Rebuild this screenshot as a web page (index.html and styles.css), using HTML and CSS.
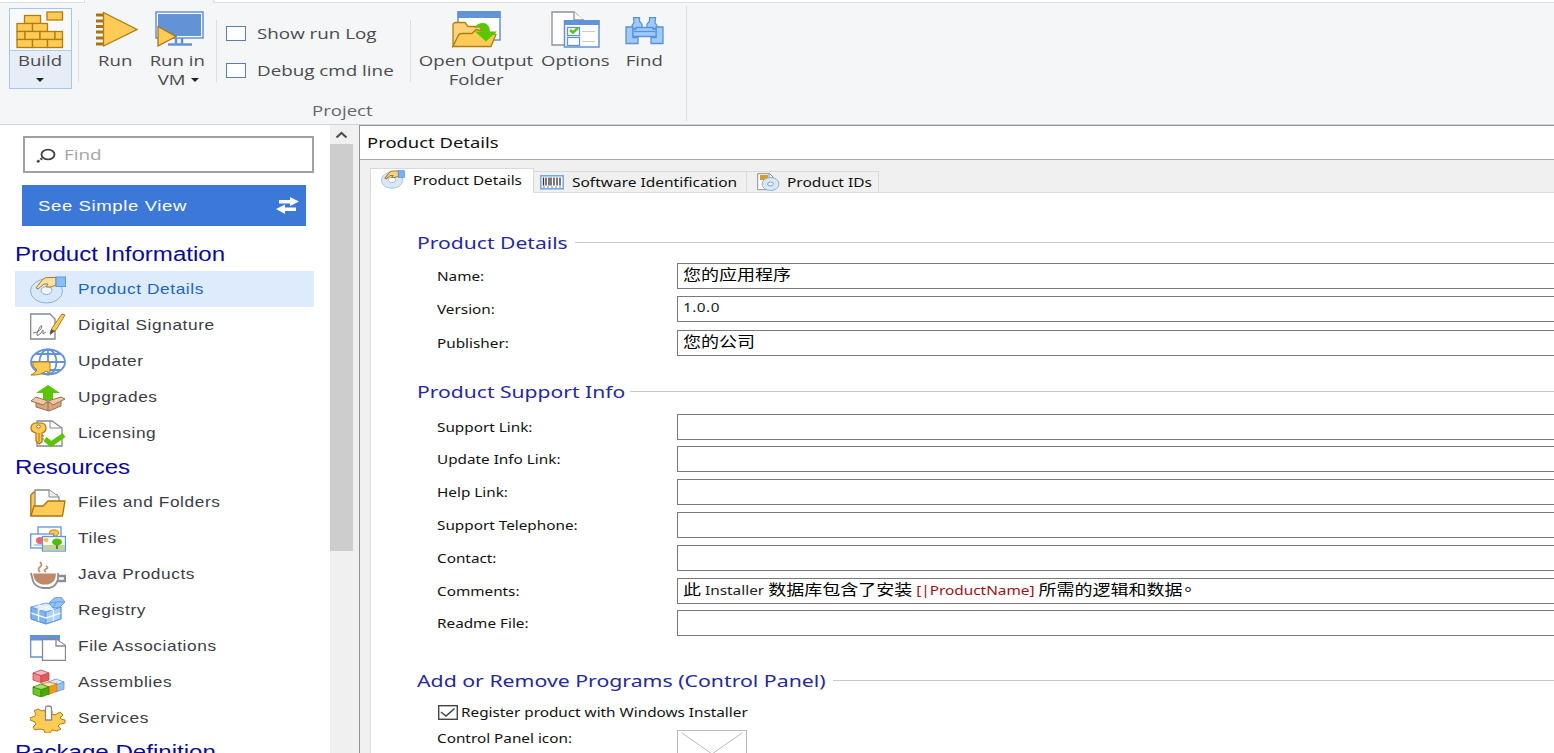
FILE: index.html
```html
<!DOCTYPE html>
<html lang="en">
<head>
<meta charset="utf-8">
<title>Product Details</title>
<link rel="stylesheet" href="styles.css">
</head>
<body>
<div class="app">
  <header class="ribbon">
    <div class="ribbon-strip"><i class="strip-left"></i><i class="strip-gap"></i><i class="strip-right"></i></div>
    <div class="ribbon-group">
      <div class="tools">
        <div class="build">
          <div class="build-icon">
            <svg width="48" height="38" viewBox="0 0 48 38" fill="#ffcb57" stroke="#b07d10" stroke-width="1.3"><rect x="31" y="1" width="15.500" height="8"/><rect x="8.500" y="4.500" width="16" height="8"/><rect x="1" y="12.500" width="15.500" height="8"/><rect x="16.500" y="12.500" width="15" height="8"/><rect x="1" y="20.500" width="8" height="8"/><rect x="9" y="20.500" width="15" height="8"/><rect x="24" y="20.500" width="15" height="8"/><rect x="39" y="20.500" width="7.500" height="8"/><rect x="1" y="28.500" width="15.500" height="8"/><rect x="16.500" y="28.500" width="15" height="8"/><rect x="31.500" y="28.500" width="15" height="8"/></svg>
          </div>
          <div class="build-label"><span class="rt">Build</span><i class="caret"></i></div>
        </div>
        <i class="sep sep-a"></i>
        <div class="tool tool-run">
          <svg width="42" height="37" viewBox="0 0 42 37"><path d="M0 4h7M0 10h7M0 15.500h7M0 21h7M0 27h7M0 33h7" stroke="#a87412" stroke-width="3"/><path d="M7.500 1.500V35L41 18.500Z" fill="#ffcb57" stroke="#b07d10" stroke-width="1.300"/></svg>
          <span class="rt">Run</span>
        </div>
        <div class="tool tool-vm">
          <svg width="49" height="37" viewBox="0 0 49 37"><rect x="1" y="1" width="47" height="26" fill="#fff" stroke="#6492d6" stroke-width="1.500"/><rect x="3" y="3" width="43" height="22" fill="#6492d6"/><path d="M21 27v6M27 27v6M13 33.500h24" stroke="#6492d6" stroke-width="2.500"/><path d="M3 15.500V35l18-9.500Z" fill="#ffcb57" stroke="#a87412" stroke-width="1.300"/></svg>
          <span class="rt">Run in</span>
          <span class="rt-row"><span class="rt">VM</span><i class="caret"></i></span>
        </div>
        <i class="sep sep-b"></i>
        <div class="checks">
          <label class="check"><i class="box"></i><span class="rt left">Show run Log</span></label>
          <label class="check"><i class="box"></i><span class="rt left">Debug cmd line</span></label>
        </div>
        <i class="sep sep-c"></i>
        <div class="tool tool-open">
          <svg width="49" height="37" viewBox="0 0 49 37"><rect x="6" y="1" width="42" height="28" fill="#fff" stroke="#6492d6" stroke-width="1.500"/><path d="M5.500 0h43v7h-43z" fill="#6492d6"/><path d="M1 35V13l2-1.500h10l3 4h13v8H8Z" fill="#ffd27a" stroke="#b07d10" stroke-width="1.300"/><path d="M1 35.500L6 25q1-2.500 4-2.500h10l4-4 20 5-5 12Z" fill="#ffcb57" stroke="#b07d10" stroke-width="1.300"/><path d="M22 17Q26 11.500 32 12Q38 13.500 38 20.500H45L34 30.500 23 20.500H30Q29 15 22 17Z" fill="#5bc500"/></svg>
          <span class="rt">Open Output</span>
          <span class="rt">Folder</span>
        </div>
        <div class="tool tool-options">
          <svg width="49" height="37" viewBox="0 0 49 37"><path d="M1 1h22l10 9v24H1Z" fill="#fff" stroke="#8e9296" stroke-width="1.300"/><path d="M23 1v8h10" fill="#fff" stroke="#8e9296" stroke-width="1.300"/><rect x="13.500" y="10" width="34.500" height="26" fill="#fff" stroke="#6492d6" stroke-width="1.500"/><path d="M13 9h35.500v5H13z" fill="#6492d6"/><rect x="16.500" y="16.500" width="12" height="8" fill="#fff" stroke="#6492d6" stroke-width="1.300"/><rect x="16.500" y="26.500" width="12" height="8" fill="#fff" stroke="#6492d6" stroke-width="1.300"/><path d="M31 20.500h13M31 30.500h13" stroke="#c9cbcd"/><path d="M19 19l3 2.500 5-4.500" fill="none" stroke="#5bc500" stroke-width="2.500"/></svg>
          <span class="rt">Options</span>
        </div>
        <div class="tool tool-find">
          <svg width="39" height="37" viewBox="0 0 39 37" fill="#9fcaff" stroke="#5b92d3" stroke-width="1.300"><path d="M8.500 6.700h6v3.500l2.500 3v4.500H7v-3l2-3Z"/><path d="M30.500 6.700h-6v3.500l-2.500 3v4.500h10v-3l-2-3Z"/><path d="M1 16h7v10.500h5v6H1ZM38 16h-7v10.500h-5v6h12Z"/><path d="M8 18h3v-1.500h17V18h3v7.500H8Z"/><path d="M9 20.500h21"/></svg>
          <span class="rt">Find</span>
        </div>
      </div>
      <div class="group-name"><span class="rt">Project</span></div>
    </div>
  </header>

  <div class="body">
    <aside class="sidebar">
      <div class="nav">
        <div class="search">
          <svg width="20" height="16" viewBox="0 0 20 16" fill="none" stroke="#444"><ellipse cx="12" cy="6.500" rx="6.500" ry="4.900" stroke-width="1.900"/><path d="M6 10.500L4.500 11.500M3.500 12.500L1 14" stroke-width="2.600"/></svg>
          <span class="search-text">Find</span>
        </div>
        <div class="simple">
          <span class="simple-text">See Simple View</span>
          <svg width="23" height="17" viewBox="0 0 23 17" fill="#fff"><path d="M3 3h11V0l9 4.500L14 9V6.500H3ZM20 10.500H9V7.500L0 12 9 17v-3h11Z"/></svg>
        </div>

        <h2 class="nav-head">Product Information</h2>
        <div class="item active">
          <svg viewBox="0 0 36 28"><ellipse cx="16.500" cy="15" rx="16" ry="12" fill="#d9e8f9" stroke="#8faed0"/><ellipse cx="16.500" cy="14.500" rx="5.500" ry="4" fill="#eef5fd" stroke="#8faed0"/><path d="M6 12L13 3q2-1.500 5-1.500h8V9l-5 2h-5l2-3h-4L8 13Z" fill="#ffe0a0" stroke="#a87a24"/><rect x="26" y="1" width="9.500" height="9.500" fill="#8bbcf5" stroke="#5d9ae0"/></svg>
          <span>Product Details</span>
        </div>
        <div class="item">
          <svg viewBox="0 0 36 28"><path d="M.7 2H20l5 5v20H.7Z" fill="#fff" stroke="#85898d" stroke-width="1.300"/><path d="M3 21q8-1 9-7q-1-2-4 5t2 3l3-4v4l3-2" fill="none" stroke="#777" /><path d="M20 22l2-6L32 2l3 1-9 15Z" fill="#ffcb57" stroke="#a87a24"/><path d="M20 23l1-6 4 2Z" fill="#555"/></svg>
          <span>Digital Signature</span>
        </div>
        <div class="item">
          <svg viewBox="0 0 36 28"><g fill="none" stroke="#6492d6" stroke-width="1.800"><ellipse cx="18" cy="14" rx="17" ry="12.500" fill="#fff"/><ellipse cx="18" cy="14" rx="8.500" ry="12.500"/><path d="M1 14h34M18 1.500v25M5 6h26M5 22h26"/></g><path d="M3 14h17v11l-4-2q-5 4.500-15 4q4-2 6-5l-4-4Z" fill="#ffcb57" stroke="#b07d10"/></svg>
          <span>Updater</span>
        </div>
        <div class="item">
          <svg viewBox="0 0 36 28"><path d="M18 1L30 9h-7v7H13V9H6Z" fill="#5bc500"/><path d="M6 14l12 5 13-5v8l-12 5L6 23Z" fill="#d7a77d" stroke="#9a7050"/><path d="M6 13l12 4-5 4L1 17ZM31 13l-13 4 5 4 12-6Z" fill="#efc8a4" stroke="#9a7050"/><path d="M18 18v9" stroke="#9a7050"/></svg>
          <span>Upgrades</span>
        </div>
        <div class="item">
          <svg viewBox="0 0 36 28"><path d="M7 1h15l10 7v18H7Z" fill="#fff" stroke="#85898d" stroke-width="1.300"/><path d="M20 1v7h11" fill="none" stroke="#85898d"/><path d="M5 3h7q4 1 4 5t-4 5v9l-3 2-3-3v-8q-5-1-5-5t4-5Z" fill="#ffcb57" stroke="#a87412" stroke-width="1.200"/><ellipse cx="8.500" cy="6.500" rx="2" ry="1.500" fill="#fff" stroke="#a87412"/><path d="M9 13v9M12 16h2M12 19h2" stroke="#a87412"/><path d="M15 19l6 5L34 15" fill="none" stroke="#5bc500" stroke-width="5"/></svg>
          <span>Licensing</span>
        </div>

        <h2 class="nav-head">Resources</h2>
        <div class="item">
          <svg viewBox="0 0 36 28"><path d="M.8 27V6L4 3h4l3 3h16v5" fill="#ffcb57" stroke="#a87412" stroke-width="1.300"/><path d="M5 18V1h14l10 7v6" fill="#fff" stroke="#85898d" stroke-width="1.300"/><path d="M19 1v7h10" fill="#eee" stroke="#85898d"/><path d="M1 27L4 17h9l5-5h17l-2.500 15Z" fill="#ffcb57" stroke="#a87412" stroke-width="1.300"/></svg>
          <span>Files and Folders</span>
        </div>
        <div class="item">
          <svg viewBox="0 0 36 28" stroke="#6492d6" stroke-width="1.300"><rect x="8" y="2" width="23" height="14" fill="#fff"/><ellipse cx="24" cy="8" rx="4.500" ry="3" fill="#ffcb57" stroke="#e59a10"/><rect x=".7" y="9" width="23" height="14" fill="#fff"/><ellipse cx="10" cy="15.500" rx="4" ry="3.500" fill="#e56a70" stroke="none"/><path d="M4 20h8" stroke="#8bbcf5"/><rect x="12.500" y="11.500" width="23" height="14.500" fill="#f9fbef"/><path d="M13 20h22v5.500H13z" fill="#bfd49b" stroke="none"/><path d="M27 17v7" stroke="#8a6540" stroke-width="2"/><ellipse cx="27" cy="17" rx="5" ry="3.500" fill="#4fbd10" stroke="none"/><ellipse cx="16" cy="15" rx="2.500" ry="2" fill="#ffbb40" stroke="none"/></svg>
          <span>Tiles</span>
        </div>
        <div class="item">
          <svg viewBox="0 0 36 28"><path d="M10 11q-3-3 0-5t0-5M16 11q-3-2 0-3t0-3" fill="none" stroke="#c59070" stroke-width="1.800"/><path d="M1 12l2 8q2 6 10 7h6q7-1 9-9V12" fill="#fff" stroke="#8b8f93" stroke-width="1.800"/><path d="M3 12.500h23q0 9-8 11h-6Q4 21.500 3 12.500Z" fill="#c08a68"/><path d="M28 15h7v5h-8" fill="none" stroke="#8b8f93" stroke-width="2.300"/></svg>
          <span>Java Products</span>
        </div>
        <div class="item">
          <svg viewBox="0 0 36 28" stroke="#5c93d6" stroke-width=".8"><path d="M1 10l15 5v12L1 22Z" fill="#7db2ee"/><path d="M16 15l15-5v12l-15 5Z" fill="#a8d0fa"/><path d="M1 10l15-4 15 4-15 5Z" fill="#d9ebff"/><path d="M1 16l15 5 15-5M8.500 12.500v12M23.500 12.500v12M8 8l15 5M23 8L8 13" fill="none" stroke="#eef6ff" stroke-width="1.400"/><path d="M1 10v12l15 5 15-5V10" fill="none"/><path d="M19 6l5-5 7-1 4 5-5 5-7 1Z" fill="#94c3f8"/><path d="M19 6l7-1 9 0M26 5l-3 6" fill="none"/></svg>
          <span>Registry</span>
        </div>
        <div class="item">
          <svg viewBox="0 0 36 28"><path d="M.7 3H29v21H.7Z" fill="#fff" stroke="#6492d6" stroke-width="1.300"/><path d="M0 2h30v5.500H0z" fill="#6492d6"/><path d="M12.500 6.500h14l9 6v15h-23Z" fill="#fff" stroke="#85898d" stroke-width="1.300"/><path d="M26 6.500V13h9.500" fill="#fff" stroke="#85898d" stroke-width="1.300"/></svg>
          <span>File Associations</span>
        </div>
        <div class="item">
          <svg viewBox="0 0 36 28" stroke-width=".8"><g stroke="#c4434c"><path d="M3 4l8 2.500v7L3 11Z" fill="#ef8a90"/><path d="M11 6.500L19 4v7l-8 2.500Z" fill="#e05a64"/><path d="M3 4l8-3 8 3-8 2.500Z" fill="#f9b9bb"/></g><g stroke="#5c93d6"><path d="M18 14l8 3v6l-8-3Z" fill="#a8d0fa"/><path d="M26 15l8-2v7l-8 3Z" fill="#94c3f8"/><path d="M18 13l8-3 8 3-8 3Z" fill="#d9ebff"/></g><g stroke="#c88312"><path d="M18 17l9-3v8l-9 4Z" fill="#ee9b1d"/><path d="M11 15l8-2 8 2-9 3Z" fill="#ffe0b0"/></g><g stroke="#398900"><path d="M3 18l8 2.500V28l-8-3Z" fill="#67c72c"/><path d="M11 20.500l8-2.500v7l-8 3Z" fill="#4aaa0b"/><path d="M3 18l8-3 8 3-8 2.500Z" fill="#a5e274"/></g></svg>
          <span>Assemblies</span>
        </div>
        <div class="item">
          <svg viewBox="0 0 36 28"><path d="M14 6h8v3l3 1 5-3 3 3-3 3 1 1 4 1v3l-5 1-2 2 3 3-4 2-5-1-2 3h-5l-1-3-4-1-5 1-2-3 3-3-1-2-5-2v-2l5-2 1-2-2-3 4-2 4 2 2-1Z" fill="#ffcb57" stroke="#b07d10"/><path d="M15.500 3q0-2 3-2t3 2v12h-6Z" fill="#fff" stroke="#85898d" stroke-width="1.300"/></svg>
          <span>Services</span>
        </div>
        <h2 class="nav-head">Package Definition</h2>
      </div>
      <div class="scroll">
        <div class="scroll-up"><svg width="13" height="8" viewBox="0 0 13 8"><path d="M1.500 6.500L6.500 2l5 4.500" fill="none" stroke="#505050" stroke-width="2.200"/></svg></div>
        <div class="thumb"></div>
      </div>
    </aside>

    <main class="main">
      <div class="title"><span>Product Details</span></div>
      <div class="page">
        <div class="tabs">
          <div class="tab on">
            <svg width="24" height="19" viewBox="0 0 36 28" preserveAspectRatio="none"><ellipse cx="16.500" cy="15" rx="16" ry="12" fill="#d9e8f9" stroke="#8faed0"/><ellipse cx="16.500" cy="14.500" rx="5.500" ry="4" fill="#fff" stroke="#8faed0"/><path d="M6 12L13 3q2-1.500 5-1.500h8V9l-5 2h-5l2-3h-4L8 13Z" fill="#f5d28d" stroke="#a87a24" stroke-width="1.500"/><rect x="26" y="1" width="9" height="10" fill="#78b0f0" stroke="#4c8cdc"/></svg>
            <span>Product Details</span>
          </div>
          <div class="tab tab-id">
            <svg width="24" height="15" viewBox="0 0 24 15"><rect x=".8" y=".8" width="22.400" height="13" fill="#fff" stroke="#74a4e4" stroke-width="1.500"/><path d="M3.500 2.500v8M6 2.500v8M9 2.500v8M11 2.500v8M14 2.500v8M17 2.500v8M20 2.500v8" stroke="#333" stroke-width="1.300"/><path d="M3 12h18" stroke="#777" stroke-dasharray="2 2"/></svg>
            <span>Software Identification</span>
          </div>
          <div class="tab tab-pid">
            <svg width="23" height="18" viewBox="0 0 23 18"><path d="M.7.700h12l4 4v12H.7Z" fill="#fff" stroke="#8b8f93"/><path d="M3 2h8v5H3z" fill="#d49b2f"/><path d="M12 1v4h4" fill="none" stroke="#8b8f93"/><ellipse cx="13.500" cy="11" rx="8.500" ry="6.500" fill="#d9e8f9" stroke="#8faed0"/><ellipse cx="13.500" cy="11" rx="2.800" ry="2" fill="#fff" stroke="#6c9fd8"/></svg>
            <span>Product IDs</span>
          </div>
        </div>
        <div class="sheet">
          <h3 class="legend legend-details"><span>Product Details</span><i></i></h3>
          <div class="rows rows-details">
            <div class="row"><label>Name:</label><div class="input"><span>您的应用程序</span></div></div>
            <div class="row"><label>Version:</label><div class="input"><span><b>1.0.0</b></span></div></div>
            <div class="row"><label>Publisher:</label><div class="input"><span>您的公司</span></div></div>
          </div>
          <h3 class="legend legend-support"><span>Product Support Info</span><i></i></h3>
          <div class="rows rows-support">
            <div class="row"><label>Support Link:</label><div class="input"></div></div>
            <div class="row"><label>Update Info Link:</label><div class="input"></div></div>
            <div class="row"><label>Help Link:</label><div class="input"></div></div>
            <div class="row"><label>Support Telephone:</label><div class="input"></div></div>
            <div class="row"><label>Contact:</label><div class="input"></div></div>
            <div class="row"><label>Comments:</label><div class="input"><span>此<b> Installer </b>数据库包含了安装<b> <em>[|ProductName]</em> </b>所需的逻辑和数据<u lang="zh-Hant">。</u></span></div></div>
            <div class="row"><label>Readme File:</label><div class="input"></div></div>
          </div>
          <h3 class="legend legend-arp"><span>Add or Remove Programs (Control Panel)</span><i></i></h3>
          <div class="register">
            <svg width="20" height="15" viewBox="0 0 20 15"><rect x=".7" y=".7" width="18.600" height="13.600" fill="#fff" stroke="#444" stroke-width="1.400"/><path d="M3 7l5 4 8.500-7.500" fill="none" stroke="#444" stroke-width="1.600"/></svg>
            <span>Register product with Windows Installer</span>
          </div>
          <div class="cp-row">
            <label>Control Panel icon:</label>
            <div class="icon-well"><svg width="68" height="44" viewBox="0 0 68 44"><path d="M4 2L64 44M64 2L4 44" stroke="#bbb"/></svg></div>
          </div>
        </div>
      </div>
    </main>
  </div>
</div>
</body>
</html>
```

FILE: styles.css
```css
* { box-sizing: border-box; }
body { margin: 0; overflow: hidden; background: #fff; }
i { font-style: normal; }
svg { display: block; flex: none; }
.app { width: 1554px; height: 753px; overflow: hidden; display: flex; flex-direction: column; }

/* Ribbon */
.ribbon { height: 125px; flex: none; background: #f4f6f8; border-bottom: 1px solid #d4d5d6; }
.ribbon-strip { display: flex; height: 3px; }
.strip-left { width: 85px; background: #fff; border-bottom: 1px solid #dcdee0; border-right: 1px solid #dcdee0; }
.strip-gap { width: 128px; }
.strip-right { flex: 1; background: #fff; border-bottom: 1px solid #dcdee0; border-left: 1px solid #dcdee0; }
.ribbon-group { width: 687px; height: 115px; margin-top: 3px; border-right: 1px solid #dcdee0; }
.tools { display: flex; height: 92px; padding-left: 9px; }
.rt { display: block; font: 14.3px/19px "Open Sans", sans-serif; color: #4b4b50; white-space: nowrap; transform: scaleX(1.3); }
.rt.left { transform-origin: 0 50%; }
.build { width: 63px; height: 81px; margin-top: 2px; border: 1px solid #a0c8f2; background: #e6edf6; }
.build-icon { height: 42px; padding: 2px 0 0 6px; background: #f7f9fc; border-bottom: 1px solid #a8cdf2; }
.build-label { display: flex; flex-direction: column; align-items: center; }
.build-label .rt { margin-left: -2px; }
.build-label .caret { margin: 8px 0 0 -2px; }
.caret { width: 0; height: 0; border: 4px solid transparent; border-top: 4px solid #222; border-bottom: 0; }
.sep { width: 1px; height: 62px; margin-top: 14px; background: #dcdfe2; flex: none; }
.sep-a { margin-left: 6px; }
.sep-b { margin-left: 7px; }
.sep-c { margin-left: 10px; }
.tool { display: flex; flex-direction: column; align-items: center; padding-top: 5px; }
.tool svg { margin-bottom: 3px; }
.tool-run { width: 42px; margin-left: 17px; }
.tool-run .rt { margin-left: -4px; }
.tool-vm { width: 60px; margin-left: 11px; }
.tool-vm svg { margin-left: 1px; }
.tool-vm > .rt { margin-left: -3px; }
.rt-row { display: flex; align-items: center; gap: 9px; margin-left: 2px; }
.checks { margin: 18px 0 0 9px; width: 174px; display: flex; flex-direction: column; gap: 18px; }
.check { display: flex; align-items: center; height: 19px; gap: 11px; }
.check .rt { transform: scaleX(1.315); }
.box { width: 20px; height: 15px; flex: none; border: 1px solid #5d7db0; background: #fff; }
.tool-open { width: 114px; margin-left: 8px; }
.tool-options { width: 68px; margin-left: 8px; }
.tool-find { width: 39px; margin-left: 16px; }
.group-name { display: flex; justify-content: center; height: 20px; padding: 3px 2px 0 0; }
.group-name .rt { color: #66666a; }

/* Sidebar */
.body { display: flex; flex: 1; min-height: 0; }
.sidebar { display: flex; width: 359px; flex: none; background: #f0f0f0; }
.nav { width: 330px; background: #fff; padding: 11px 0 0 15px; }
.search { width: 291px; height: 37px; margin-left: 7.500px; border: 2px solid #a0a0a0; display: flex; align-items: center; padding-left: 11px; gap: 8px; }
.search svg { margin-top: 3px; }
.search-text { font: 14.5px "Open Sans", sans-serif; color: #a5a5a5; transform: scaleX(1.3); transform-origin: 0 50%; }
.simple { width: 284px; height: 41px; margin: 12px 0 12px 7px; background: #3b78d8; display: flex; align-items: center; justify-content: space-between; padding: 0 7px 0 16px; }
.simple-text { font: 15px "Liberation Sans", sans-serif; letter-spacing: .5px; color: #fff; transform: scaleX(1.235); transform-origin: 0 50%; }
.nav-head { margin: 0; height: 33px; font: 19.5px/33px "Liberation Sans", sans-serif; color: #0a0a96; white-space: nowrap; width: max-content; transform: scaleX(1.235); transform-origin: 0 50%; }
.item { width: 299px; height: 36px; display: flex; align-items: center; padding-left: 15px; gap: 12px; }
.item svg { width: 36px; height: 28px; margin-top: 1px; }
.item span { font: 14.5px "Liberation Sans", sans-serif; letter-spacing: .5px; color: #3c3c46; white-space: nowrap; transform: scaleX(1.19); transform-origin: 0 50%; }
.item.active { background: #deebfd; }
.item.active span { color: #1b66c0; }
.scroll { width: 23px; }
.scroll-up { height: 19px; padding: 6px 0 0 5px; }
.thumb { height: 407px; background: #cdcdcd; }

/* Main pane */
.main { flex: 1; min-width: 0; border-left: 1px solid #929292; border-top: 1px solid #929292; background: #f0f0f0; }
.title { height: 34px; padding-left: 7px; background: #fff; border-bottom: 1px solid #aaa; }
.title span { display: block; width: max-content; font: 14.5px/33px "Noto Sans", sans-serif; color: #111; transform: scaleX(1.27); transform-origin: 0 50%; }
.page { padding: 8px 0 0 10px; }
.tabs { display: flex; align-items: flex-end; height: 24px; }
.tab { display: flex; align-items: center; height: 21px; border: 1px solid #d9d9d9; border-width: 1px 1px 0 0; }
.tab span { font: 12.8px "Noto Sans", sans-serif; color: #111; white-space: nowrap; transform: scaleX(1.21); transform-origin: 0 50%; }
.tab.on { width: 164px; height: 25px; margin-bottom: -1px; padding: 0 0 3px 10px; gap: 8px; background: #fff; border-left-width: 1px; }
.tab.on span { transform: scaleX(1.19); }
.tab-id { width: 213px; padding-left: 6px; gap: 8px; }
.tab-pid { width: 132px; padding-left: 10px; gap: 7px; }
.sheet { height: 570px; background: #fff; border: 1px solid #dcdcdc; border-width: 1px 0 0 1px; padding-top: 36px; }
.legend { margin: 0 0 0 46px; height: 26px; display: flex; align-items: center; }
.legend span { width: 158px; flex: none; }
.legend span { font: 17px "Noto Sans", sans-serif; color: #28289a; white-space: nowrap; transform: scaleX(1.24); transform-origin: 0 50%; }
.legend i { flex: 1; height: 1px; background: #c8c8c8; }
.legend-support span { width: 213px; }
.legend-arp span { width: 416px; transform: scaleX(1.25); }
.rows { display: flex; flex-direction: column; margin-left: 66px; }
.rows-details { gap: 7.25px; margin-top: 8px; margin-bottom: 23px; }
.rows-support { gap: 6.83px; margin-top: 9px; margin-bottom: 31px; }
.row { display: flex; align-items: center; height: 26px; }
label { white-space: nowrap; }
.row label, .cp-row label { width: 240px; flex: none; }
.row label, .cp-row label, .register span { font: 12.8px/18px "Noto Sans", sans-serif; color: #111; transform: scaleX(1.195); transform-origin: 0 50%; }
.input { flex: 1; height: 26px; border: 1px solid #7a7a7a; border-right: 0; background: #fff; padding-left: 5px; }
.input span { display: block; width: max-content; font: 15px/20px "Noto Sans CJK SC", sans-serif; color: #000; white-space: nowrap; transform: scaleX(1.2); transform-origin: 0 50%; }
.input b { font: 12.8px/20px "Noto Sans", sans-serif; color: #222; }
.rows-details .input b { display: block; line-height: 21px; letter-spacing: .4px; }
.input u { font-family: "Noto Sans CJK TC", sans-serif; text-decoration: none; margin-left: -3px; }
.input em { font-style: normal; color: #9c1020; }
.register { display: flex; align-items: center; gap: 3px; height: 18px; margin: 10px 0 0 67px; }
.cp-row { display: flex; margin: 8px 0 0 66px; }
.icon-well { width: 70px; height: 46px; border: 1px solid #bbb; margin-top: 1px; }
```
